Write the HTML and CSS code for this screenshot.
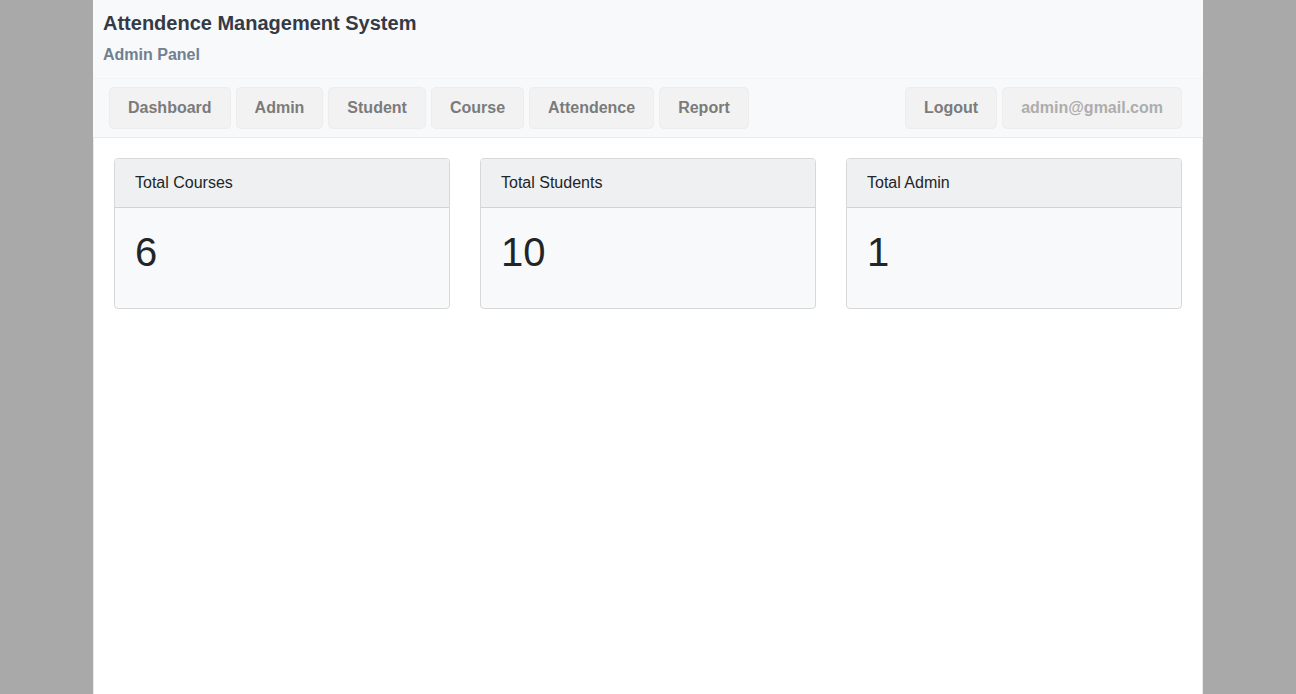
FILE: index.html
```html
<!DOCTYPE html>
<html lang="en">
<head>
<meta charset="utf-8">
<title>Attendence Management System</title>
<link rel="stylesheet" href="styles.css">
</head>
<body>
<div class="page">
  <header class="header">
    <h1 class="title">Attendence Management System</h1>
    <p class="subtitle">Admin Panel</p>
  </header>
  <nav class="navbar">
    <div class="nav-group">
      <a class="nav-link" href="#">Dashboard</a>
      <a class="nav-link" href="#">Admin</a>
      <a class="nav-link" href="#">Student</a>
      <a class="nav-link" href="#">Course</a>
      <a class="nav-link" href="#">Attendence</a>
      <a class="nav-link" href="#">Report</a>
    </div>
    <div class="nav-group">
      <a class="nav-link" href="#">Logout</a>
      <a class="nav-link nav-user" href="#">admin@gmail.com</a>
    </div>
  </nav>
  <main class="content">
    <div class="cards">
      <section class="card">
        <h2 class="card-header">Total Courses</h2>
        <p class="card-value">6</p>
      </section>
      <section class="card">
        <h2 class="card-header">Total Students</h2>
        <p class="card-value">10</p>
      </section>
      <section class="card">
        <h2 class="card-header">Total Admin</h2>
        <p class="card-value">1</p>
      </section>
    </div>
  </main>
</div>
</body>
</html>
```
FILE: styles.css
```css
* {
  box-sizing: border-box;
}

body {
  margin: 0;
  background: #a9a9a9;
  color: #212529;
  font-family: "Liberation Sans", Arial, sans-serif;
  font-size: 16px;
  line-height: 24px;
}

.page {
  display: flex;
  flex-direction: column;
  max-width: 1110px;
  min-height: 100vh;
  margin: 0 auto;
  background: #fff;
}

.header {
  padding: 8px 10px 11px;
  background: #f8f9fb;
  border-bottom: 1px solid #f3f4f6;
}

.title {
  margin: 0;
  color: #343a46;
  font-size: 20px;
  line-height: 30px;
}

.subtitle {
  margin: 5px 0 0;
  color: #708090;
  font-weight: bold;
}

.navbar {
  display: flex;
  justify-content: space-between;
  padding: 8px 21px 8px 16px;
  background: #f8f9fb;
  border-bottom: 1px solid #e9ecef;
}

.nav-group {
  display: flex;
  gap: 5px;
}

.nav-link {
  padding: 8px 18px;
  border: 1px solid #ededed;
  border-radius: 5px;
  background: #f2f2f2;
  color: #7b7b7b;
  font-weight: bold;
  text-decoration: none;
}

.nav-user {
  color: #adadad;
}

.content {
  flex: 1;
  padding: 20px;
  border: solid #e9ecef;
  border-width: 0 1px;
}

.cards {
  display: grid;
  grid-template-columns: repeat(3, 1fr);
  gap: 30px;
}

.card {
  border: 1px solid #d7d8d9;
  border-radius: 4px;
  background: #f8f9fb;
  overflow: hidden;
}

.card-header {
  margin: 0;
  padding: 12px 20px;
  border-bottom: 1px solid #d0d2d4;
  background: #eff0f2;
  font-size: 16px;
  font-weight: normal;
}

.card-value {
  margin: 0;
  padding: 20px 20px 32px;
  font-size: 40px;
  line-height: 48px;
}
```
